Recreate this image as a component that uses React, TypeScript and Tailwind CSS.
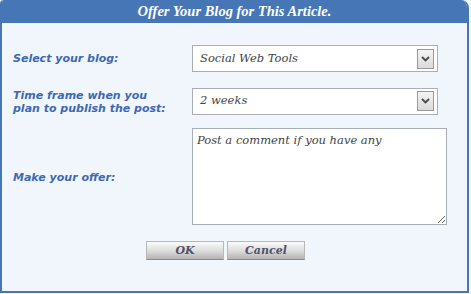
import React from 'react';

const labelCls =
  "text-[11px] leading-[13px] font-bold italic text-[#3d69b3] [font-family:'DejaVu_Sans',Verdana,sans-serif]";
const fieldFont = "[font-family:'DejaVu_Serif',Georgia,serif] italic text-[11.5px] text-[#444]";

function SelectBox({ value }: { value: string }) {
  return (
    <div className="w-[246px] h-[27px] bg-white border border-[#a9adb8] flex items-center justify-between pl-[7px] pr-[3px]">
      <span className={fieldFont}>{value}</span>
      <span className="w-[17px] h-[20px] border border-[#9a9a9a] bg-gradient-to-b from-[#f4f4f4] to-[#dadada] flex items-center justify-center">
        <svg width="9" height="6" viewBox="0 0 9 6">
          <path d="M1 1 L4.5 4.5 L8 1" fill="none" stroke="#4a4a4a" strokeWidth="1.8" />
        </svg>
      </span>
    </div>
  );
}

function DialogButton({ children }: { children: React.ReactNode }) {
  return (
    <button className="w-[78px] h-[19px] border border-[#b8b8b8] border-b-[#8a8a8a] bg-gradient-to-b from-[#fbfbfb] via-[#dedede] to-[#b4b4b4] text-[11px] font-bold italic text-[#505068] [font-family:'DejaVu_Serif',Georgia,serif] leading-none">
      {children}
    </button>
  );
}

export default function App() {
  return (
    <div className="w-[471px] h-[294px] bg-[#f1f6fd] overflow-hidden">
      <div className="w-[469px] h-[293px] flex flex-col bg-[#f1f6fd] border-l-2 border-r-2 border-b-2 border-[#4676b6] rounded-tl-[4px] rounded-tr-[8px] overflow-hidden">
        <div className="h-[23px] bg-[#4676b6] flex items-center justify-center">
          <span className="text-white text-[14.5px] font-bold italic [font-family:'Liberation_Serif',Georgia,serif]">
            Offer Your Blog for This Article.
          </span>
        </div>
        <div className="pt-[22px] pl-[11px]">
          <div className="grid grid-cols-[179px_auto] items-center">
            <div className={labelCls}>Select your blog:</div>
            <SelectBox value="Social Web Tools" />
          </div>
          <div className="grid grid-cols-[179px_auto] items-center mt-[15px]">
            <div className={`${labelCls} pt-[2px]`}>
              Time frame when you
              <br />
              plan to publish the post:
            </div>
            <SelectBox value="2 weeks" />
          </div>
          <div className="grid grid-cols-[179px_auto] items-center mt-[13px]">
            <div className={`${labelCls} pt-[2px]`}>Make your offer:</div>
            <textarea
              defaultValue="Post a comment if you have any"
              className={`w-[255px] h-[97px] bg-white border border-[#a9adb8] px-[4px] py-[3px] outline-none resize text-[#4a4a4a] ${fieldFont}`}
            />
          </div>
          <div className="flex gap-[3px] mt-[16px] pl-[133px]">
            <DialogButton>OK</DialogButton>
            <DialogButton>Cancel</DialogButton>
          </div>
        </div>
      </div>
    </div>
  );
}
